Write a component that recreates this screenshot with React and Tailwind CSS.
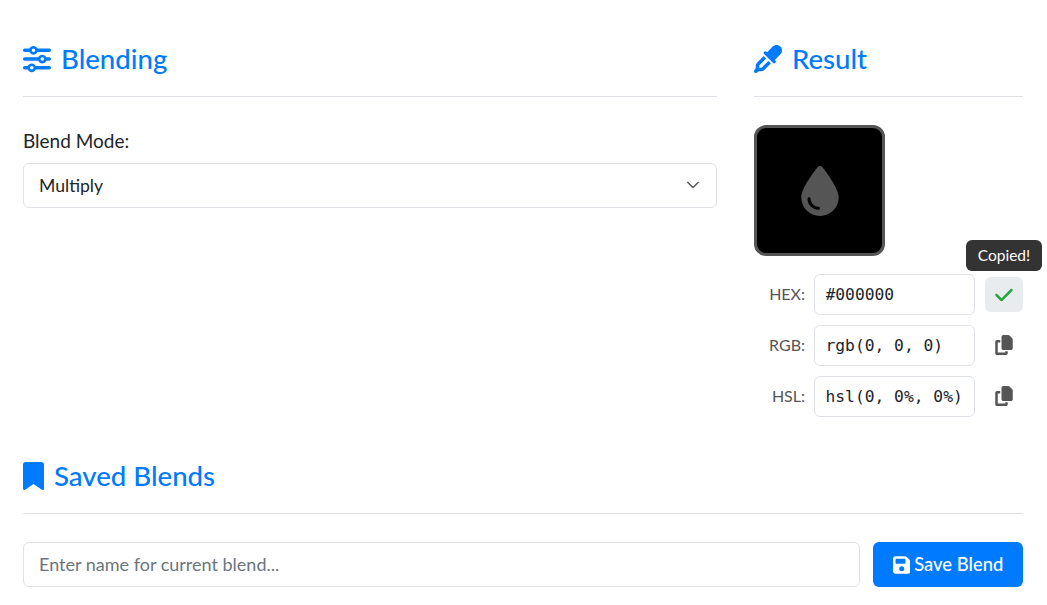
import React from 'react';
import { FaSliders, FaEyeDropper, FaDroplet, FaBookmark, FaCheck, FaCopy, FaFloppyDisk } from 'react-icons/fa6';
import { BsChevronDown } from 'react-icons/bs';

const font = "font-['Lato','Noto_Sans',sans-serif]";

const Heading = ({ icon, children }) => (
  <div className="flex items-center gap-[10px] h-[36px] mb-[19px] text-[#007bff] text-[27.6px] leading-none">
    {icon}
    <h2 className="font-medium">{children}</h2>
  </div>
);

const ColorRow = ({ label, value, copied }) => (
  <div className="relative flex items-center h-[41px]">
    <span className="w-[51px] text-right text-[#555] text-[16px] pb-[2px]">{label}</span>
    <input
      readOnly
      value={value}
      className="ml-[9px] w-[161px] h-full px-[10.5px] border border-[#dee2e6] rounded-md text-[16.3px] text-[#212529] font-['DejaVu_Sans_Mono',monospace] outline-none"
    />
    <button className={`ml-[10px] w-[38px] h-[35px] flex items-center justify-center rounded-md ${copied ? 'bg-[#e9ecef] text-[#28a745]' : 'text-[#555] pb-[2px]'}`}>
      {copied ? <FaCheck size={20} /> : <FaCopy size={20} />}
    </button>
    {copied && (
      <div className="absolute left-[212px] top-[-34px] w-[76px] h-[31px] flex items-center justify-center rounded-md bg-[#333] text-white text-[15.5px]">
        Copied!
      </div>
    )}
  </div>
);

export default function App() {
  return (
    <div className={`${font} bg-white min-h-[605px] pl-[23px] pr-[24px] pt-[41px] text-[#212529]`}>
      <div className="flex gap-[37px]">
        <section className="w-[694px]">
          <Heading icon={<FaSliders size={28} />}>Blending</Heading>
          <hr className="border-[#dee2e6]" />
          <label className="block mt-[32px] mb-[10px] text-[19px] leading-[24px]">Blend Mode:</label>
          <div className="relative">
            <select className="appearance-none w-full h-[45px] px-[15px] pt-[2px] border border-[#dee2e6] rounded-md text-[17.6px] outline-none bg-white">
              <option>Multiply</option>
            </select>
            <BsChevronDown size={14} className="absolute right-[17px] top-[15px] text-[#555] stroke-[0.8px]" />
          </div>
        </section>
        <section className="w-[269px]">
          <Heading icon={<FaEyeDropper size={28} />}>Result</Heading>
          <hr className="border-[#dee2e6]" />
          <div className="mt-[28px] w-[131px] h-[131px] bg-black border-[3px] border-[#555] rounded-xl flex items-center justify-center">
            <FaDroplet size={50} className="text-[#555]" />
          </div>
          <div className="mt-[18px] flex flex-col gap-[10px]">
            <ColorRow label="HEX:" value="#000000" copied />
            <ColorRow label="RGB:" value="rgb(0, 0, 0)" />
            <ColorRow label="HSL:" value="hsl(0, 0%, 0%)" />
          </div>
        </section>
      </div>
      <section className="mt-[41px]">
        <Heading icon={<FaBookmark className="w-[21px] h-[28px]" />}>Saved Blends</Heading>
        <hr className="border-[#dee2e6]" />
        <div className="mt-[28px] flex gap-[13px]">
          <input
            placeholder="Enter name for current blend..."
            className="flex-1 h-[45px] px-[15px] pb-[2px] border border-[#dee2e6] rounded-md text-[18px] outline-none placeholder:text-[#6c757d]"
          />
          <button className="w-[150px] h-[45px] flex items-center justify-center gap-[4px] rounded-md bg-[#007bff] text-white text-[18.4px] font-medium">
            <FaFloppyDisk className="w-[17.5px] h-[20px]" />
            Save Blend
          </button>
        </div>
      </section>
    </div>
  );
}
